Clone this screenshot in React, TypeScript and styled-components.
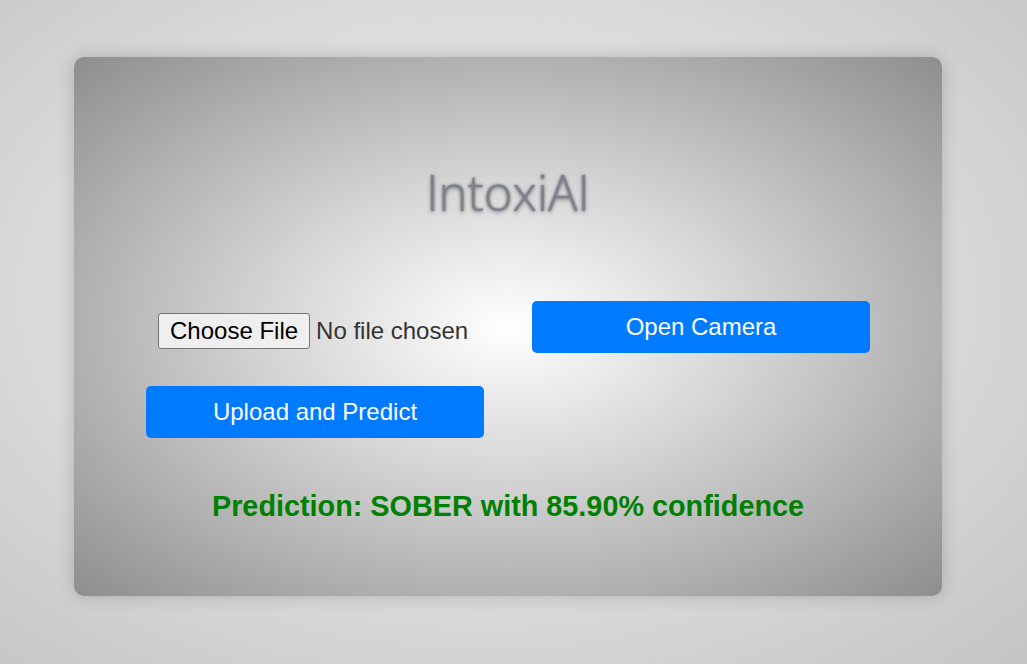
import React from "react";
import styled, { createGlobalStyle } from "styled-components";

const GlobalStyle = createGlobalStyle`
  html, body {
    margin: 0;
    padding: 0;
  }
  body {
    font-family: "Liberation Sans", Arial, sans-serif;
    background: radial-gradient(ellipse at 47% 45%, #f2f2f2 0%, #e3e3e3 40%, #c4c4c4 100%);
    min-height: 100vh;
  }
`;

const Page = styled.div`
  min-height: 100vh;
  box-sizing: border-box;
  display: flex;
  justify-content: center;
  align-items: flex-start;
  padding: 57px 11px 0 0;
`;

const Card = styled.main`
  width: 868px;
  height: 539px;
  box-sizing: border-box;
  padding: 103px 72px 0;
  border-radius: 10px;
  background: radial-gradient(ellipse at 50% 50%, #ffffff 0%, #d6d6d6 38%, #8e8e8e 100%);
  box-shadow: 0 0 18px rgba(0, 0, 0, 0.18);
  display: flex;
  flex-direction: column;
  align-items: center;
  color: #333;
`;

const Title = styled.h1`
  margin: 0;
  font-family: "Open Sans", "Noto Sans", sans-serif;
  font-weight: 350;
  font-size: 49px;
  line-height: 65px;
  color: #7d828c;
  text-shadow: 0 0 3px rgba(0, 0, 0, 0.5), 0 2px 4px rgba(0, 0, 0, 0.25);
`;

const Controls = styled.section`
  margin-top: 76px;
  display: grid;
  grid-template-columns: 338px 338px;
  column-gap: 48px;
  align-items: start;
`;

const Column = styled.div`
  display: flex;
  flex-direction: column;
  align-items: flex-start;
`;

const FileRow = styled.label`
  margin: 12px 0 0 12px;
  height: 36px;
  display: flex;
  align-items: center;
  gap: 6px;
  font-size: 24px;
  cursor: pointer;
`;

const HiddenInput = styled.input`
  display: none;
`;

const FileButton = styled.span`
  box-sizing: border-box;
  height: 36px;
  padding: 0 11px;
  display: flex;
  align-items: center;
  background: #efefef;
  border: 1px solid #767676;
  border-radius: 3px;
  color: #000;
`;

const FileStatus = styled.span`
  color: #333;
`;

const ActionButton = styled.button<{ $offset?: number }>`
  width: 338px;
  height: 52px;
  margin-top: ${(p) => p.$offset ?? 0}px;
  border: none;
  border-radius: 5px;
  background: #007bff;
  color: #fff;
  font-family: "Liberation Sans", Arial, sans-serif;
  font-size: 24px;
  cursor: pointer;
`;

const Prediction = styled.p`
  margin: 52px 0 0;
  font-size: 28.8px;
  font-weight: 700;
  color: #008000;
`;

export default function App() {
  return (
    <>
      <GlobalStyle />
      <Page>
        <Card>
          <Title>IntoxiAI</Title>
          <Controls>
            <Column>
              <FileRow>
                <HiddenInput type="file" accept="image/*" />
                <FileButton>Choose File</FileButton>
                <FileStatus>No file chosen</FileStatus>
              </FileRow>
              <ActionButton $offset={37}>Upload and Predict</ActionButton>
            </Column>
            <Column>
              <ActionButton>Open Camera</ActionButton>
            </Column>
          </Controls>
          <Prediction>Prediction: SOBER with 85.90% confidence</Prediction>
        </Card>
      </Page>
    </>
  );
}
